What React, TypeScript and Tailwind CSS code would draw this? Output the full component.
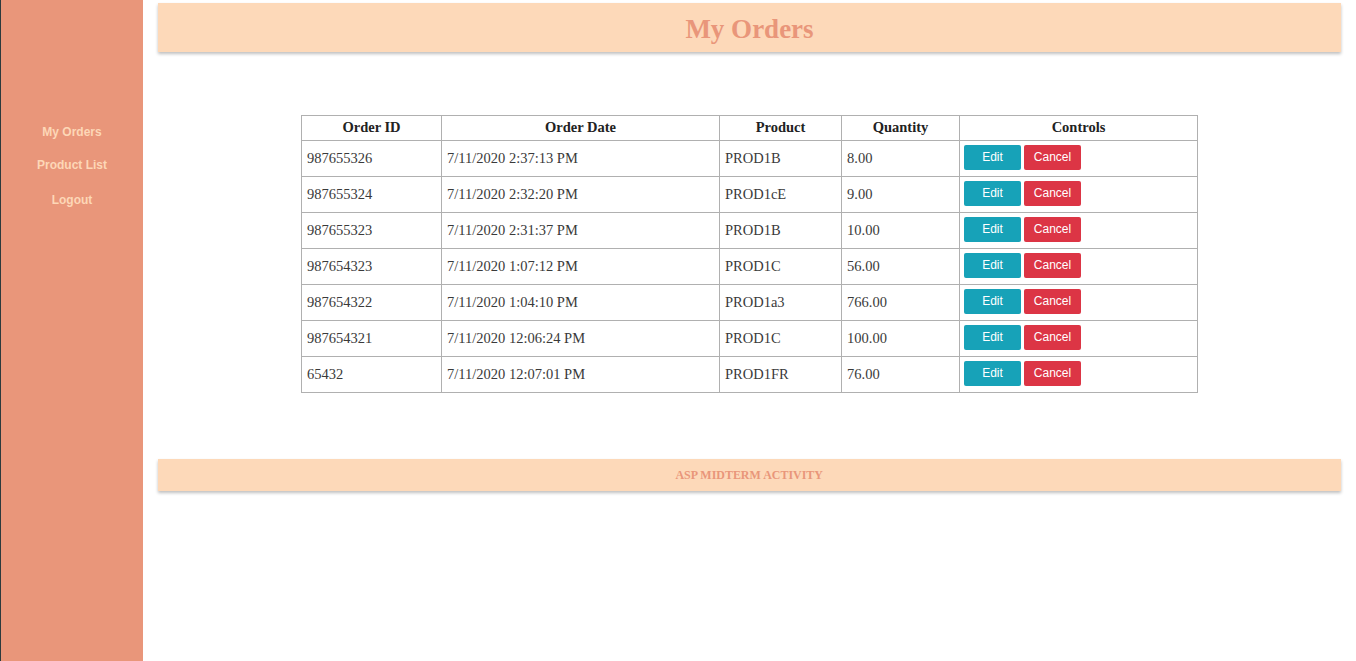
import React from 'react';

const orders = [
  { id: '987655326', date: '7/11/2020 2:37:13 PM', product: 'PROD1B', qty: '8.00' },
  { id: '987655324', date: '7/11/2020 2:32:20 PM', product: 'PROD1cE', qty: '9.00' },
  { id: '987655323', date: '7/11/2020 2:31:37 PM', product: 'PROD1B', qty: '10.00' },
  { id: '987654323', date: '7/11/2020 1:07:12 PM', product: 'PROD1C', qty: '56.00' },
  { id: '987654322', date: '7/11/2020 1:04:10 PM', product: 'PROD1a3', qty: '766.00' },
  { id: '987654321', date: '7/11/2020 12:06:24 PM', product: 'PROD1C', qty: '100.00' },
  { id: '65432', date: '7/11/2020 12:07:01 PM', product: 'PROD1FR', qty: '76.00' },
];

const App: React.FC = () => {
  return (
    <div className="flex h-[661px] bg-white font-['Liberation_Serif',serif]">
      {/* Sidebar */}
      <aside className="w-[143px] shrink-0 border-l border-[#2b3a3d] bg-[#e9967a] pt-[124px]">
        <nav className="flex flex-col items-center gap-[17px] font-['Liberation_Sans',Arial,sans-serif] text-[12px] font-bold text-[#fdd7b7]">
          <a className="leading-[16px]">My Orders</a>
          <a className="leading-[16px]">Product List</a>
          <a className="mt-[2px] leading-[16px]">Logout</a>
        </nav>
      </aside>

      {/* Main */}
      <main className="flex-1 pl-[15px] pr-[15px] pt-[3px]">
        <header className="flex h-[49px] items-center justify-center bg-[#fdd9b9] shadow-[0_2px_3px_rgba(0,0,0,0.25)]">
          <h1 className="pt-[3px] text-[27px] font-bold text-[#e9967a]">My Orders</h1>
        </header>

        <div className="mt-[63px] flex justify-center">
          <table className="w-[897px] border-collapse border border-[#9a9a9a] text-[14.5px] text-[#3a3a3a]">
            <thead>
              <tr className="h-[25px] text-[#222]">
                <th className="w-[140px] border border-[#b0b0b0] font-bold">Order ID</th>
                <th className="w-[278px] border border-[#b0b0b0] font-bold">Order Date</th>
                <th className="w-[122px] border border-[#b0b0b0] font-bold">Product</th>
                <th className="w-[118px] border border-[#b0b0b0] font-bold">Quantity</th>
                <th className="border border-[#b0b0b0] font-bold">Controls</th>
              </tr>
            </thead>
            <tbody>
              {orders.map((o) => (
                <tr key={o.id} className="h-[36px]">
                  <td className="border border-[#b0b0b0] px-[5px]">{o.id}</td>
                  <td className="border border-[#b0b0b0] px-[5px]">{o.date}</td>
                  <td className="border border-[#b0b0b0] px-[5px]">{o.product}</td>
                  <td className="border border-[#b0b0b0] px-[5px]">{o.qty}</td>
                  <td className="border border-[#b0b0b0] px-[4px] pb-[2px]">
                    <div className="flex gap-[3px] font-['Liberation_Sans',Arial,sans-serif] text-[12px] text-white">
                      <button className="h-[25px] w-[57px] rounded-[2px] bg-[#17a2b8] pb-[2px]">Edit</button>
                      <button className="h-[25px] w-[57px] rounded-[2px] bg-[#dc3545] pb-[2px]">Cancel</button>
                    </div>
                  </td>
                </tr>
              ))}
            </tbody>
          </table>
        </div>

        <footer className="mt-[66px] flex h-[32px] items-center justify-center bg-[#fdd9b9] shadow-[0_2px_3px_rgba(0,0,0,0.25)]">
          <span className="scale-x-[0.92] text-[13px] font-bold text-[#e9967a]">ASP MIDTERM ACTIVITY</span>
        </footer>
      </main>
    </div>
  );
};

export default App;
